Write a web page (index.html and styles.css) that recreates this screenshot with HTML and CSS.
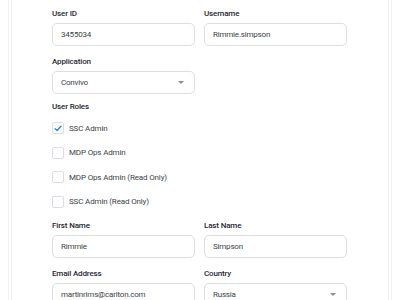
FILE: index.html
```html
<!DOCTYPE html>
<html>
<head>
<meta charset="utf-8">
<link rel="stylesheet" href="styles.css">
</head>
<body>
<div class="page">
  <div class="panel">
    <form class="form">
      <div class="row">
        <div class="field">
          <label class="label">User ID</label>
          <div class="input">3455034</div>
        </div>
        <div class="field">
          <label class="label">Username</label>
          <div class="input">Rimmie.simpson</div>
        </div>
      </div>
      <div class="row gap-top">
        <div class="field">
          <label class="label">Application</label>
          <div class="input select">Convivo<span class="caret"></span></div>
        </div>
      </div>
      <div class="roles">
        <div class="label roles-title">User Roles</div>
        <div class="check-list">
          <div class="check-row"><span class="box checked"><svg width="8" height="7" viewBox="0 0 8 7"><path d="M1 3.6 L3 5.5 L7 1.2" fill="none" stroke="#2b7de9" stroke-width="1.3" stroke-linecap="round" stroke-linejoin="round"/></svg></span><span class="check-label">SSC Admin</span></div>
          <div class="check-row"><span class="box"></span><span class="check-label">MDP Ops Admin</span></div>
          <div class="check-row"><span class="box"></span><span class="check-label">MDP Ops Admin (Read Only)</span></div>
          <div class="check-row"><span class="box"></span><span class="check-label">SSC Admin (Read Only)</span></div>
        </div>
      </div>
      <div class="row names">
        <div class="field">
          <label class="label">First Name</label>
          <div class="input">Rimmie</div>
        </div>
        <div class="field">
          <label class="label">Last Name</label>
          <div class="input">Simpson</div>
        </div>
      </div>
      <div class="row gap-top">
        <div class="field">
          <label class="label">Email Address</label>
          <div class="input">martinrims@carlton.com</div>
        </div>
        <div class="field">
          <label class="label">Country</label>
          <div class="input select">Russia<span class="caret"></span></div>
        </div>
      </div>
    </form>
  </div>
</div>
</body>
</html>
```
FILE: styles.css
```css
* { box-sizing: border-box; }
html, body {
  margin: 0;
  padding: 0;
  background: #ffffff;
  font-family: Roboto, "Liberation Sans", sans-serif;
  overflow: hidden;
}
.page {
  width: 400px;
  height: 300px;
  padding: 0 8px;
}
.panel {
  height: 300px;
  border-left: 1px solid #f3f3f3;
  border-right: 1px solid #f3f3f3;
  padding: 0 2px;
}
.form {
  height: 100%;
  border-left: 1px solid #ececec;
  border-right: 1px solid #ececec;
  padding: 9px 0 0 40px;
}
.row {
  display: flex;
  gap: 9px;
}
.gap-top { margin-top: 11px; }
.field {
  width: 143px;
  display: flex;
  flex-direction: column;
}
.label {
  font-size: 8px;
  line-height: 10px;
  font-weight: 500;
  letter-spacing: -0.15px;
  color: #1f2733;
  margin-bottom: 4px;
}
.input {
  height: 23px;
  border: 1px solid #dedede;
  border-radius: 5px;
  padding: 0 8px;
  font-size: 8px;
  letter-spacing: -0.2px;
  line-height: 21px;
  color: #3a3f47;
  position: relative;
}
.select .caret {
  position: absolute;
  right: 10px;
  top: 9px;
  width: 0;
  height: 0;
  border-left: 3.5px solid transparent;
  border-right: 3.5px solid transparent;
  border-top: 3.5px solid #8a8f96;
}
.roles { margin-top: 8px; }
.roles-title { margin-bottom: 10px; }
.check-list {
  display: flex;
  flex-direction: column;
  gap: 12.5px;
}
.check-row {
  display: flex;
  align-items: center;
  height: 12px;
  gap: 5px;
}
.box {
  width: 12px;
  height: 12px;
  border: 1px solid #d9dce0;
  border-radius: 2px;
  display: flex;
  align-items: center;
  justify-content: center;
}
.check-label {
  font-size: 8px;
  letter-spacing: -0.15px;
  color: #3a3f47;
}
.names { margin-top: 13px; }
```
